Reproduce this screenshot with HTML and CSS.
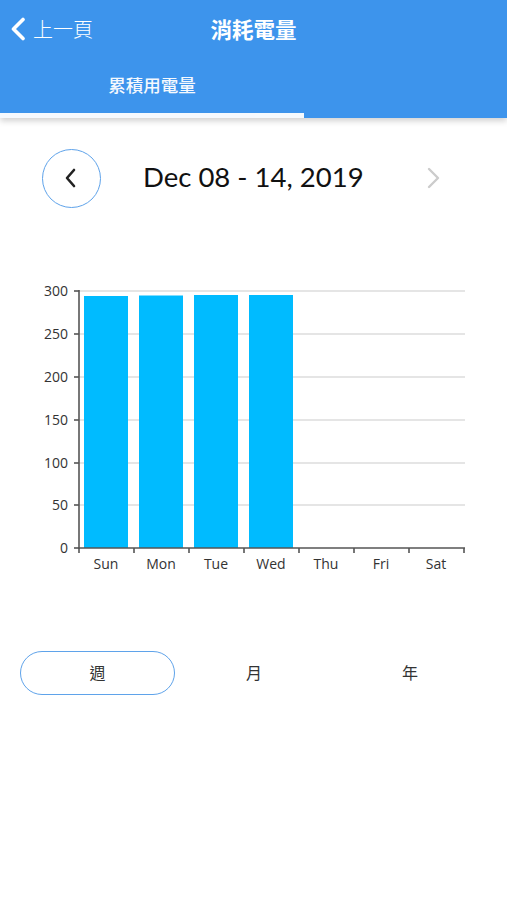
FILE: index.html
```html
<!DOCTYPE html>
<html lang="zh-Hant">
<head>
<meta charset="utf-8">
<title>消耗電量</title>
<link rel="stylesheet" href="styles.css">
</head>
<body>
<header class="header">
  <div class="topbar">
    <div class="back">
      <svg class="back-icon" width="18" height="24" viewBox="0 0 18 24"><path d="M14 2.5 L4.5 12 L14 21.5" fill="none" stroke="#fff" stroke-width="3.6" stroke-linecap="round" stroke-linejoin="round"/></svg>
      <span class="back-text">上一頁</span>
    </div>
    <h1 class="title">消耗電量</h1>
  </div>
  <div class="tabs">
    <div class="tab active">累積用電量</div>
  </div>
</header>

<section class="date-row">
  <button class="nav-btn prev">
    <svg width="16" height="22" viewBox="0 0 16 22"><path d="M11 3 L4 11 L11 19" fill="none" stroke="#222" stroke-width="2.6" stroke-linecap="round" stroke-linejoin="round"/></svg>
  </button>
  <div class="date-text">Dec 08 - 14, 2019</div>
  <button class="nav-btn next">
    <svg width="16" height="24" viewBox="0 0 16 24"><path d="M4 3 L13 12 L4 21" fill="none" stroke="#ccc" stroke-width="2.4" stroke-linecap="round" stroke-linejoin="round"/></svg>
  </button>
</section>

<section class="chart">
  <svg width="507" height="330" viewBox="0 0 507 330">
    <g stroke="#dcdcdc" stroke-width="1.5">
      <line x1="79" y1="31" x2="465" y2="31"/>
      <line x1="79" y1="74" x2="465" y2="74"/>
      <line x1="79" y1="117" x2="465" y2="117"/>
      <line x1="79" y1="160" x2="465" y2="160"/>
      <line x1="79" y1="203" x2="465" y2="203"/>
      <line x1="79" y1="245" x2="465" y2="245"/>
    </g>
    <g fill="#00bbff">
      <rect x="84" y="36" width="44" height="252"/>
      <rect x="139" y="35.5" width="44" height="252.5"/>
      <rect x="194" y="35" width="44" height="253"/>
      <rect x="249" y="35" width="44" height="253"/>
    </g>
    <g stroke="#555" stroke-width="1.6">
      <line x1="79" y1="30" x2="79" y2="289"/>
      <line x1="78" y1="288" x2="465" y2="288"/>
      <line x1="74" y1="31" x2="79" y2="31"/>
      <line x1="74" y1="74" x2="79" y2="74"/>
      <line x1="74" y1="117" x2="79" y2="117"/>
      <line x1="74" y1="160" x2="79" y2="160"/>
      <line x1="74" y1="203" x2="79" y2="203"/>
      <line x1="74" y1="245" x2="79" y2="245"/>
      <line x1="74" y1="288" x2="79" y2="288"/>
      <line x1="79" y1="288" x2="79" y2="293"/>
      <line x1="134" y1="288" x2="134" y2="293"/>
      <line x1="189" y1="288" x2="189" y2="293"/>
      <line x1="244" y1="288" x2="244" y2="293"/>
      <line x1="299" y1="288" x2="299" y2="293"/>
      <line x1="354" y1="288" x2="354" y2="293"/>
      <line x1="409" y1="288" x2="409" y2="293"/>
      <line x1="464" y1="288" x2="464" y2="293"/>
    </g>
    <g class="ylab" text-anchor="end">
      <text x="68" y="36">300</text>
      <text x="68" y="79">250</text>
      <text x="68" y="122">200</text>
      <text x="68" y="165">150</text>
      <text x="68" y="208">100</text>
      <text x="68" y="250">50</text>
      <text x="68" y="293">0</text>
    </g>
    <g class="xlab" text-anchor="middle">
      <text x="106" y="309">Sun</text>
      <text x="161" y="309">Mon</text>
      <text x="216" y="309">Tue</text>
      <text x="271" y="309">Wed</text>
      <text x="326" y="309">Thu</text>
      <text x="381" y="309">Fri</text>
      <text x="436" y="309">Sat</text>
    </g>
  </svg>
</section>

<nav class="period">
  <div class="period-item active">週</div>
  <div class="period-item">月</div>
  <div class="period-item">年</div>
</nav>
</body>
</html>
```
FILE: styles.css
```css
* { box-sizing: border-box; }
html, body {
  margin: 0;
  padding: 0;
  background: #fff;
}
body {
  width: 507px;
  height: 900px;
  overflow: hidden;
  font-family: "Noto Sans CJK TC", "Noto Sans", sans-serif;
}
.header {
  background: #3d94ec;
  height: 118px;
  display: flex;
  flex-direction: column;
  box-shadow: 0 3px 6px rgba(0,0,0,0.18);
  position: relative;
}
.topbar {
  height: 58px;
  display: flex;
  align-items: center;
  justify-content: center;
  position: relative;
}
.back {
  position: absolute;
  left: 9px;
  top: 17px;
  display: flex;
  align-items: center;
  gap: 6px;
}
.back-text {
  color: #fff;
  font-size: 20px;
  font-weight: 300;
  line-height: 24px;
}
.title {
  margin: 0;
  color: #fff;
  font-size: 21.5px;
  font-weight: 700;
  line-height: 24px;
}
.tabs {
  flex: 1;
  display: flex;
}
.tab {
  width: 304px;
  display: flex;
  align-items: center;
  justify-content: center;
  color: #fff;
  font-size: 17.5px;
  font-weight: 500;
  padding-bottom: 2px;
  opacity: 0.95;
}
.tab.active {
  border-bottom: 5px solid #fff;
}
.date-row {
  display: flex;
  align-items: center;
  height: 60px;
  margin-top: 30px;
  padding-left: 42px;
}
.nav-btn {
  border: 0;
  background: none;
  padding: 0;
  display: flex;
  align-items: center;
  justify-content: center;
}
.prev {
  width: 59px;
  height: 59px;
  border: 1.5px solid #5fa3ea;
  border-radius: 50%;
  padding-right: 2px;
}
.date-text {
  font-family: Lato, "Noto Sans", sans-serif;
  font-size: 27.5px;
  color: #111;
  margin-left: 42px;
  width: 240px;
  white-space: nowrap;
  padding-bottom: 3px;
}
.next {
  margin-left: 42px;
  width: 16px;
  height: 24px;
}
.chart {
  margin-top: 52px;
  height: 330px;
}
.chart svg { display: block; }
.ylab text, .xlab text {
  font-family: "Open Sans", "DejaVu Sans", sans-serif;
  font-size: 14px;
  fill: #333;
}
.period {
  margin-top: 61px;
  margin-left: 20px;
  display: grid;
  grid-template-columns: 156px 156px 156px;
}
.period-item {
  height: 44px;
  display: flex;
  align-items: center;
  justify-content: center;
  font-size: 16px;
  color: #333;
  padding-bottom: 3px;
}
.period-item.active {
  border: 1.5px solid #5fa3ea;
  border-radius: 22px;
  width: 155px;
}
```
